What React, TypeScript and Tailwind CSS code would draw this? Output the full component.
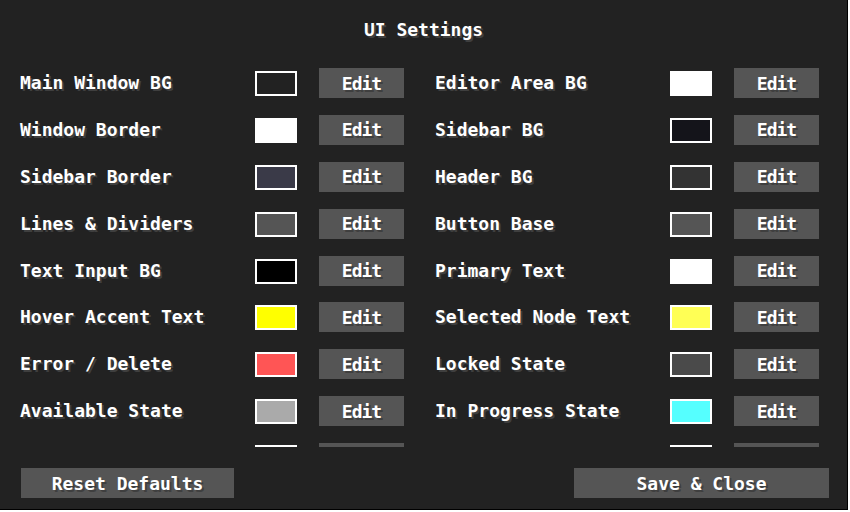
import React from "react";

type Item = { label: string; color: string };

const left: Item[] = [
  { label: "Main Window BG", color: "bg-[#222222]" },
  { label: "Window Border", color: "bg-[#ffffff]" },
  { label: "Sidebar Border", color: "bg-[#3a3a48]" },
  { label: "Lines & Dividers", color: "bg-[#555555]" },
  { label: "Text Input BG", color: "bg-[#000000]" },
  { label: "Hover Accent Text", color: "bg-[#ffff00]" },
  { label: "Error / Delete", color: "bg-[#ff5555]" },
  { label: "Available State", color: "bg-[#aaaaaa]" },
  { label: "", color: "bg-[#55ff55]" },
];

const right: Item[] = [
  { label: "Editor Area BG", color: "bg-[#ffffff]" },
  { label: "Sidebar BG", color: "bg-[#14141a]" },
  { label: "Header BG", color: "bg-[#333333]" },
  { label: "Button Base", color: "bg-[#555555]" },
  { label: "Primary Text", color: "bg-[#ffffff]" },
  { label: "Selected Node Text", color: "bg-[#ffff55]" },
  { label: "Locked State", color: "bg-[#4a4a4a]" },
  { label: "In Progress State", color: "bg-[#55ffff]" },
  { label: "", color: "bg-[#aaaaaa]" },
];

const font =
  "font-['DejaVu_Sans_Mono',monospace] font-bold text-[18px] text-white [text-shadow:2px_2px_0_#3f3f3f] whitespace-nowrap";

function Row({ item, last }: { item: Item; last?: boolean }) {
  return (
    <div className="flex items-start h-[30px]">
      <div className={`${font} w-[235px] leading-[30px]`}>{item.label}</div>
      <div className={`${last ? "mt-[2px]" : "mt-[3px]"} w-[42px] h-[25px] border-2 border-white ${item.color}`} />
      <button
        className={`${font} ml-[22px] w-[85px] h-[30px] bg-[#555555] flex items-center justify-center tracking-[-1px]`}
      >
        {last ? "" : "Edit"}
      </button>
    </div>
  );
}

export default function App() {
  const rows = left.map((l, i) => [l, right[i]] as const);
  return (
    <div className="w-[850px] h-[512px] bg-white">
      <div className="w-[848px] h-[510px] bg-[#222222] border-r border-b border-black flex flex-col">
        <div className={`${font} h-[59px] flex items-center justify-center`}>UI Settings</div>
        <div className="h-[388px] overflow-hidden pt-[9px]">
          <div className="grid grid-cols-[384px_384px] gap-x-[31px] gap-y-[16.875px] pl-[20px]">
            {rows.map(([l, r], i) => (
              <React.Fragment key={i}>
                <Row item={l} last={i === rows.length - 1} />
                <Row item={r} last={i === rows.length - 1} />
              </React.Fragment>
            ))}
          </div>
        </div>
        <div className="mt-[21px] flex justify-between pl-[21px] pr-[18px]">
          <button className={`${font} w-[213px] h-[30px] bg-[#555555] flex items-center justify-center`}>
            Reset Defaults
          </button>
          <button className={`${font} w-[255px] h-[30px] bg-[#555555] flex items-center justify-center`}>
            Save &amp; Close
          </button>
        </div>
      </div>
    </div>
  );
}
